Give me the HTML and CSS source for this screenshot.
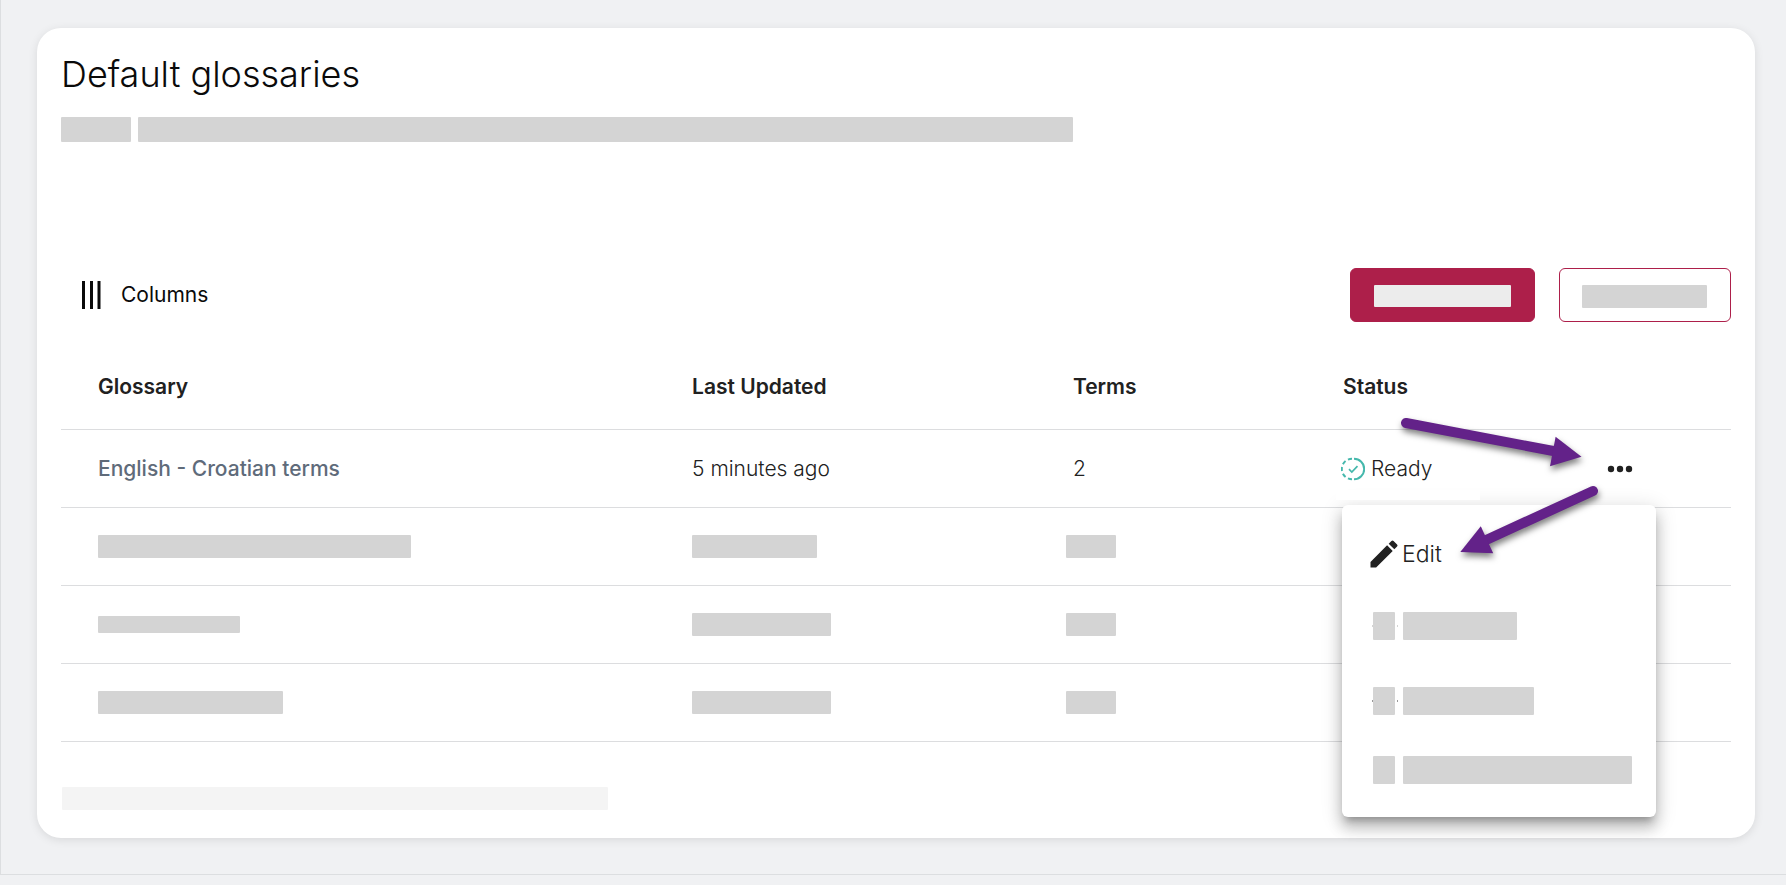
FILE: index.html
```html
<!DOCTYPE html>
<html lang="en">
<head>
<meta charset="utf-8">
<title>Default glossaries</title>
<link rel="stylesheet" href="styles.css">
</head>
<body>
<main class="page">
  <section class="card">
    <h1 class="title">Default glossaries</h1>
    <div class="intro">
      <span class="bar intro-link"></span>
      <span class="bar intro-text"></span>
    </div>

    <div class="toolbar">
      <button class="columns-button" type="button">
        <svg class="columns-icon" width="20" height="28" viewBox="0 0 20 28" aria-hidden="true"><path d="M2.500 0V28M10.500 0V28M18 0V28" stroke="#0a0a0a" stroke-width="3"/></svg>
        Columns
      </button>
      <div class="actions">
        <button class="action primary" type="button" aria-label="Primary action"><span class="bar"></span></button>
        <button class="action secondary" type="button" aria-label="Secondary action"><span class="bar"></span></button>
      </div>
    </div>

    <table class="glossaries">
      <colgroup>
        <col class="col-name"><col class="col-updated"><col class="col-terms"><col class="col-status"><col class="col-more">
      </colgroup>
      <thead>
        <tr><th>Glossary</th><th>Last Updated</th><th>Terms</th><th>Status</th><th></th></tr>
      </thead>
      <tbody>
        <tr>
          <td><a class="glossary-link" href="#">English - Croatian terms</a></td>
          <td>5 minutes ago</td>
          <td>2</td>
          <td>
            <span class="status">
              <svg width="24" height="24" viewBox="0 0 24 24" fill="none" stroke="#45b8ac" stroke-width="2" aria-hidden="true"><path d="M13 1.800A10.200 10.200 0 0 1 13 22.200"/><path d="M11 22.200A10.200 10.200 0 0 1 11 1.800" pathLength="100" stroke-dasharray="13 8.750"/><path d="M8 12.200L10.800 15L16.500 9.200" stroke-width="1.700"/></svg>
              Ready
            </span>
          </td>
          <td>
            <div class="more">
              <button class="more-button" type="button" aria-label="More options">
                <svg width="26" height="8" viewBox="0 0 26 8" fill="#212121" aria-hidden="true"><circle cx="4" cy="4" r="3.200"/><circle cx="13" cy="4" r="3.200"/><circle cx="22" cy="4" r="3.200"/></svg>
              </button>
              <div class="menu">
                <button class="menu-item edit" type="button">
                  <svg width="36" height="36" viewBox="0 0 24 24" fill="#212121" aria-hidden="true"><path d="M3 17.250V21h3.750L17.810 9.940l-3.750-3.750L3 17.250zM20.710 7.040a1 1 0 0 0 0-1.410l-2.340-2.340a1 1 0 0 0-1.410 0l-1.830 1.830 3.750 3.750 1.830-1.830z"/></svg>
                  Edit
                </button>
                <button class="menu-item second" type="button" aria-label="Menu option 2"><span class="bar menu-icon"></span><span class="bar menu-label w-short"></span></button>
                <button class="menu-item third" type="button" aria-label="Menu option 3"><span class="bar menu-icon"></span><span class="bar menu-label w-medium"></span></button>
                <button class="menu-item" type="button" aria-label="Menu option 4"><span class="bar menu-icon"></span><span class="bar menu-label w-long"></span></button>
              </div>
              <svg class="arrows" width="210" height="160" viewBox="1395 410 210 160" fill="#632289" aria-hidden="true">
                <path d="M1406 423L1556 451.500" stroke="#632289" stroke-width="10" stroke-linecap="round"/>
                <path d="M1581.500 456.800L1555.600 436.700L1550 466.200Z"/>
                <path d="M1593 491L1484 541" stroke="#632289" stroke-width="10" stroke-linecap="round"/>
                <path d="M1460.300 552L1480.800 526.300L1493.200 553.200Z"/>
              </svg>
            </div>
          </td>
        </tr>
        <tr><td><span class="bar name-long"></span></td><td><span class="bar date-short"></span></td><td><span class="bar count"></span></td><td></td><td></td></tr>
        <tr><td><span class="bar name-short"></span></td><td><span class="bar date"></span></td><td><span class="bar count"></span></td><td></td><td></td></tr>
        <tr><td><span class="bar name-medium"></span></td><td><span class="bar date"></span></td><td><span class="bar count"></span></td><td></td><td></td></tr>
      </tbody>
    </table>
    <span class="bar footnote"></span>
  </section>
</main>
</body>
</html>
```
FILE: styles.css
```css
* { box-sizing: border-box; }

body {
  margin: 0;
  background: #f0f1f3;
  color: #212121;
  font-family: Inter, "Liberation Sans", sans-serif;
  font-size: 21px;
  line-height: 28px;
}

button {
  border: 0;
  background: none;
  color: inherit;
  font: inherit;
  cursor: pointer;
}

.page {
  padding: 28px 31px 36px 36px;
  border-left: 1px solid #dcdee0;
  border-bottom: 1px solid #dcdee0;
}

.card {
  padding: 24px 24px 28px;
  border-radius: 24px;
  background: #fff;
  box-shadow: 0 2px 10px rgba(0, 0, 0, 0.1);
}

.title {
  margin: 0 0 21px;
  color: #0a0a0a;
  font-size: 36px;
  font-weight: 300;
  line-height: 44px;
}

.bar {
  display: block;
  flex: none;
  height: 23px;
  border-radius: 1px;
  background: #d4d4d4;
}

.intro { display: flex; gap: 7px; }
.intro .bar { height: 25px; }
.intro-link { width: 70px; }
.intro-text { width: 935px; }

.toolbar {
  display: flex;
  justify-content: space-between;
  align-items: center;
  margin-top: 126px;
}

.columns-button {
  display: flex;
  align-items: center;
  gap: 20px;
  padding: 0 20px;
  color: #0a0a0a;
}

.actions { display: flex; gap: 24px; }

.action {
  height: 54px;
  padding: 2px 23px 0;
  border: 1px solid #ad1f4a;
  border-radius: 6px;
}

.primary { background: #ad1f4a; }
.primary .bar { width: 137px; height: 22px; background: #ececec; }
.secondary { padding-left: 22px; }
.secondary .bar { width: 125px; }

.glossaries {
  width: 100%;
  margin-top: 23px;
  border-collapse: collapse;
  table-layout: fixed;
}

.col-name { width: 35.57%; }
.col-updated { width: 22.81%; }
.col-terms { width: 16.17%; }
.col-status { width: 15.81%; }
.col-more { width: 9.64%; }

.glossaries th,
.glossaries td {
  height: 78px;
  padding: 1px 0 0 37px;
  border-bottom: 1px solid #dcdddf;
  font-weight: 300;
  text-align: left;
}

.glossaries th { height: 84px; font-weight: 600; }

.glossary-link { color: #5f6b7a; font-weight: 500; text-decoration: none; }

.name-long { width: 313px; }
.name-short { width: 142px; height: 17px; }
.name-medium { width: 185px; }
.date { width: 139px; }
.date-short { width: 125px; }
.count { width: 50px; margin-left: -7px; }

.status { position: relative; display: flex; align-items: center; gap: 6px; margin-left: -2px; }

.status::after {
  content: "";
  position: absolute;
  top: 35px;
  left: -5px;
  z-index: 2;
  width: 144px;
  height: 10px;
  background: #fff;
}

.more { position: relative; width: 26px; }
.more-button { display: block; padding: 10px 0; }
.more-button svg { display: block; }

.menu {
  position: absolute;
  top: 50px;
  right: 100%;
  z-index: 1;
  width: 314px;
  margin-right: -49px;
  padding: 31px 24px 33px 26px;
  border-radius: 6px;
  background: #fff;
  box-shadow: 0 7px 7px -4px rgba(0, 0, 0, 0.25), 0 11px 14px 1px rgba(0, 0, 0, 0.18), 0 4px 20px 3px rgba(0, 0, 0, 0.12);
}

.menu-item {
  display: flex;
  align-items: center;
  gap: 8px;
  width: 100%;
  height: 28px;
  padding: 0 0 0 5px;
  font-size: 23px;
}

.menu-item.edit { height: 36px; gap: 0; padding: 0; margin: 0 0 40px -2px; }
.menu-item.second { margin-bottom: 47px; }
.menu-item.third { margin-bottom: 41px; }
.menu-item .bar { height: 28px; }
.menu-icon { width: 22px; }
.w-short { width: 114px; }
.w-medium { width: 131px; }
.w-long { width: 229px; }

.second .menu-icon,
.third .menu-icon { position: relative; }

.second .menu-icon::before,
.third .menu-icon::before {
  content: "";
  position: absolute;
  top: 13px;
  left: -1px;
  width: 24px;
  height: 2px;
  border: solid #d4d4d4;
  border-width: 0 1px;
}

.third .menu-icon::before { border-color: #999; }

.arrows {
  position: absolute;
  top: -45px;
  right: 28px;
  z-index: 3;
  overflow: visible;
  filter: drop-shadow(1px 4px 3px rgba(0, 0, 0, 0.5));
  pointer-events: none;
}

.footnote { width: 546px; margin: 45px 0 0 1px; background: #f4f4f4; }
```
